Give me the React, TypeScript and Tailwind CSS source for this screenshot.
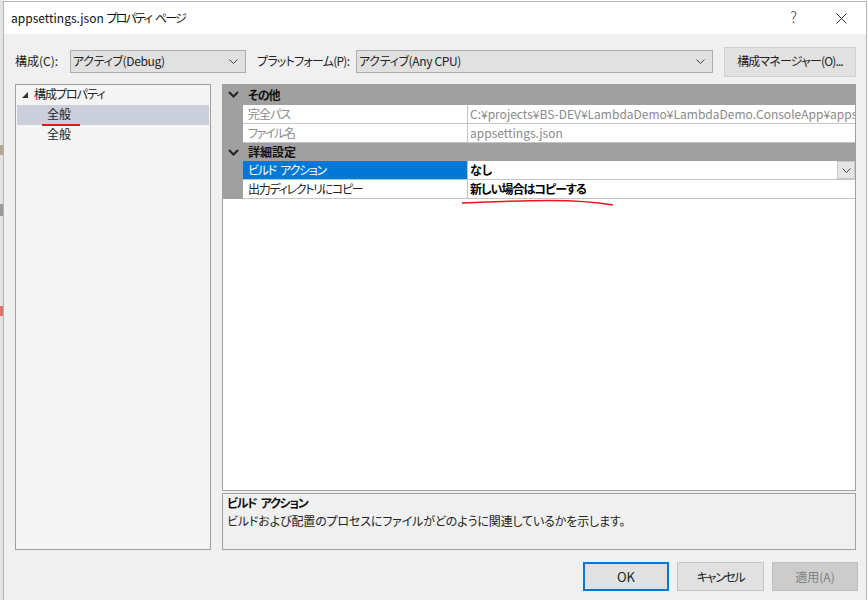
const font = { fontFamily: '"Noto Sans CJK JP", "Noto Sans", sans-serif', fontFeatureSettings: '"palt"' };

function Chevron({ className = "" }: { className?: string }) {
  return (
    <svg width="9" height="5" viewBox="0 0 9 5" className={className} fill="none" stroke="#404040" strokeWidth="1">
      <path d="M0.5 0.5 L4.5 4.5 L8.5 0.5" />
    </svg>
  );
}

function CatChevron() {
  return (
    <svg width="11" height="7" viewBox="0 0 11 7" fill="none" stroke="#222" strokeWidth="2">
      <path d="M1 1 L5.5 5.5 L10 1" />
    </svg>
  );
}

function Select({ text, className }: { text: string; className: string }) {
  return (
    <div className={`h-[23px] flex items-center justify-between bg-[#e1e1e1] border border-[#adadad] pl-[2px] pr-[7px] text-[12px] text-[#222] ${className}`}>
      <span className="pb-[2px] tracking-[-0.35px]">{text}</span>
      <Chevron />
    </div>
  );
}

function Category({ text, tall, className = "" }: { text: string; tall?: boolean; className?: string }) {
  return (
    <div className={`flex items-center bg-[#a0a0a0] ${tall ? "h-[21px]" : "h-[18px]"}`}>
      <div className="w-[20px] flex justify-center"><CatChevron /></div>
      <span className={`text-[12px] font-bold text-[#111] pl-[5px] ${className}`}>{text}</span>
    </div>
  );
}

function Row({ name, value, grey, selected, bold, dropdown, nameClass = "", valueClass = "" }: { name: string; value: string; grey?: boolean; selected?: boolean; bold?: boolean; dropdown?: boolean; nameClass?: string; valueClass?: string }) {
  return (
    <div className="flex h-[19px]">
      <div className="w-[20px] shrink-0 bg-[#a0a0a0]" />
      <div className={`w-[224px] shrink-0 pl-[5px] border-b border-[#c4c4c4] text-[12px] leading-[17px] ${nameClass} ${selected ? "bg-[#0078d7] text-white" : grey ? "bg-white text-[#8a8a8a]" : "bg-white text-[#222]"}`}>{name}</div>
      <div className={`flex-1 min-w-0 border-l border-b border-[#c4c4c4] flex justify-between bg-white text-[12px] leading-[17px] pl-[2px] overflow-hidden whitespace-nowrap ${grey ? "text-[#8a8a8a]" : "text-black"} ${bold ? "font-bold" : ""}`}>
        <span className={`overflow-hidden ${valueClass}`}>{value}</span>
        {dropdown && (
          <div className="w-[18px] h-[18px] shrink-0 bg-[#e5e5e5] border border-[#c8c8c8] flex items-center justify-center"><Chevron /></div>
        )}
      </div>
    </div>
  );
}

function Button({ text, className }: { text: string; className: string }) {
  return (
    <div className={`h-[29px] flex items-center justify-center text-[12px] ${className}`}>{text}</div>
  );
}

export default function App() {
  return (
    <div className="relative w-[868px] h-[600px] overflow-hidden bg-white flex" style={font}>
      <div className="w-[3px] shrink-0 bg-[#e4e4e4] flex flex-col">
        <div className="h-[145px]" />
        <div className="h-[10px] bg-[#b5a896]" />
        <div className="h-[49px]" />
        <div className="h-[12px] bg-[#9a9a9a]" />
        <div className="h-[90px]" />
        <div className="h-[10px] bg-[#e07070]" />
      </div>
      <div className="flex-1 min-w-0 flex flex-col border-l border-t border-r border-[#b4b4b4] mt-px mr-px bg-[#f0f0f0]">
        <div className="h-[32px] shrink-0 bg-white flex items-center justify-between pl-[7px] pr-[19px]">
          <span className="text-[12px] text-[#111] pb-px">appsettings.json <span className="tracking-[-1.8px] [word-spacing:3px]">プロパティ ページ</span></span>
          <div className="flex items-center gap-[39px] text-[#333]">
            <span className="text-[15px] font-light pb-[2px]">?</span>
            <svg width="11" height="11" viewBox="0 0 11 11" fill="none" stroke="#333" strokeWidth="1"><path d="M0.5 0.5 L10.5 10.5 M10.5 0.5 L0.5 10.5" /></svg>
          </div>
        </div>
        <div className="flex-1 min-h-0 flex flex-col pl-[11px] pr-[10px] pt-[13px] pb-[9px]">
          <div className="flex items-center h-[29px] text-[12px] text-[#222]">
            <span className="w-[55px] pb-[2px]">構成(C):</span>
            <Select text="アクティブ(Debug)" className="w-[176px]" />
            <span className="w-[99px] ml-[11px] whitespace-nowrap pb-[2px] tracking-[-0.75px]">プラットフォーム(P):</span>
            <Select text="アクティブ(Any CPU)" className="w-[357px]" />
            <div className="ml-[11px] w-[132px] h-[30px] flex items-center justify-center bg-[#e1e1e1] border border-[#cfcfcf] pb-[2px] tracking-[-0.85px]">構成マネージャー(O)...</div>
          </div>
          <div className="flex gap-[11px] mt-[8px] h-[466px]">
            <div className="w-[196px] bg-[#f5f5f5] border border-[#a0a0a0] px-px text-[12px] text-[#222]">
              <div className="h-[20px] flex items-center pl-[5px]">
                <svg width="6" height="6" viewBox="0 0 6 6" className="mr-[6px]"><path d="M6 0 V6 H0 Z" fill="#333" /></svg>
                <span className="pb-[2px] tracking-[-1px]">構成プロパティ</span>
              </div>
              <div className="h-[20px] flex items-center pl-[30px] pb-[2px] bg-[#cbcedb] relative">
                全般
                <div className="absolute left-[25px] bottom-[-1px] w-[38px] h-[2px] bg-[#e8141c]" />
              </div>
              <div className="h-[19px] flex items-center pl-[30px] pb-[2px]">全般</div>
            </div>
            <div className="flex-1 min-w-0 flex flex-col gap-[2px]">
              <div className="h-[407px] bg-white border border-[#a0a0a0] border-t-0 flex flex-col">
                <Category text="その他" tall className="tracking-[-1px]" />
                <Row name="完全パス" nameClass="tracking-[-1px]" value="C:¥projects¥BS-DEV¥LambdaDemo¥LambdaDemo.ConsoleApp¥appsettings.json" grey />
                <Row name="ファイル名" nameClass="tracking-[-1.4px]" value="appsettings.json" grey />
                <Category text="詳細設定" />
                <Row name="ビルド アクション" nameClass="tracking-[-1.3px] [word-spacing:3px]" value="なし" selected bold dropdown />
                <Row name="出力ディレクトリにコピー" nameClass="tracking-[-1.3px]" value="新しい場合はコピーする" valueClass="tracking-[-1px]" bold />
              </div>
              <div className="h-[57px] border border-[#a0a0a0] px-[4px] text-[12px] leading-[18px]">
                <div className="font-bold text-[#111] tracking-[-1.3px] [word-spacing:3px]">ビルド アクション</div>
                <div className="text-[#222] tracking-[-0.15px]">ビルドおよび配置のプロセスにファイルがどのように関連しているかを示します。</div>
              </div>
            </div>
          </div>
          <div className="flex justify-end gap-[8px] mt-[12px] -mr-[2px] text-[#222]">
            <Button text="OK" className="w-[86px] bg-[#e1e1e1] border-2 border-[#0078d7] text-[13px]" />
            <Button text="キャンセル" className="w-[87px] bg-[#e1e1e1] border border-[#c4c4c4] tracking-[-1.4px]" />
            <Button text="適用(A)" className="w-[86px] bg-[#cccccc] border border-[#c0c0c0] text-[#7f7f7f]" />
          </div>
        </div>
      </div>
      <svg className="absolute left-[460px] top-[198px]" width="156" height="10" viewBox="0 0 156 10" fill="none" stroke="#f01020" strokeWidth="1.6">
        <path d="M2 5 C30 4 60 2.5 90 2.5 C115 2.5 135 4 153 7" />
      </svg>
    </div>
  );
}
